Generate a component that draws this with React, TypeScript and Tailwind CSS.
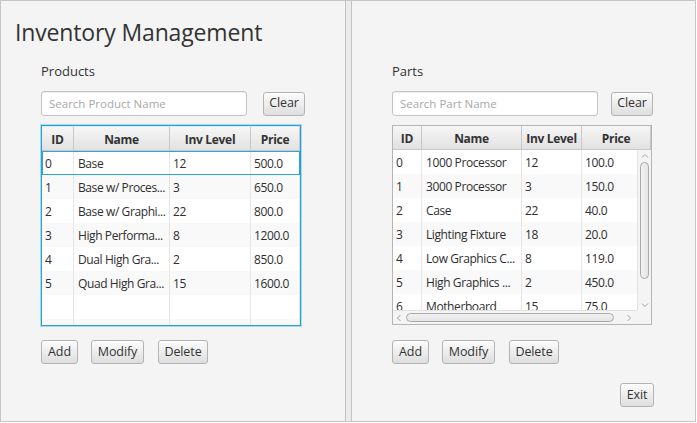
import React from "react";

const btnBase =
  "h-[24px] rounded-[3px] border border-[#b3b3b3] bg-gradient-to-b from-[#fcfcfc] to-[#dedede] text-[12.5px] tracking-[-0.1px] text-[#333] flex items-center justify-center shadow-[inset_0_1px_0_#ffffff] shrink-0";

function Btn({ label, w }: { label: string; w: string }) {
  return <div className={`${btnBase} ${w}`}>{label}</div>;
}

function Search({ placeholder }: { placeholder: string }) {
  return (
    <div className="w-[206px] h-[25px] rounded-[3px] border border-[#c4c4c4] bg-white shadow-[inset_0_1px_1px_#ececec] flex items-center pl-[7px] text-[11.5px] text-[#a8a8a8]">
      {placeholder}
    </div>
  );
}

type Row = [string, string, string, string];

const products: Row[] = [
  ["0", "Base", "12", "500.0"],
  ["1", "Base w/ Proces...", "3", "650.0"],
  ["2", "Base w/ Graphi...", "22", "800.0"],
  ["3", "High Performa...", "8", "1200.0"],
  ["4", "Dual High Gra...", "2", "850.0"],
  ["5", "Quad High Gra...", "15", "1600.0"],
];

const parts: Row[] = [
  ["0", "1000 Processor", "12", "100.0"],
  ["1", "3000 Processor", "3", "150.0"],
  ["2", "Case", "22", "40.0"],
  ["3", "Lighting Fixture", "18", "20.0"],
  ["4", "Low Graphics C...", "8", "119.0"],
  ["5", "High Graphics ...", "2", "450.0"],
  ["6", "Motherboard", "15", "75.0"],
];

const headCell =
  "h-full flex items-center justify-center pt-[3px] font-bold text-[12px] tracking-[-0.3px] text-[#333] border-r border-[#c8c8c8] shrink-0";
const cell =
  "h-full flex items-center pl-[3px] pt-[2px] text-[12px] tracking-[-0.4px] text-[#2e2e2e] border-r border-[#e6e6e6] shrink-0 overflow-hidden whitespace-nowrap";

function Header({ widths }: { widths: string[] }) {
  const labels = ["ID", "Name", "Inv Level", "Price"];
  return (
    <div className="h-[24px] flex border-b border-[#c8c8c8] bg-gradient-to-b from-[#f6f6f6] to-[#e2e2e2] shrink-0">
      {labels.map((l, i) => (
        <div key={l} className={`${headCell} ${widths[i]}`}>
          {l}
        </div>
      ))}
    </div>
  );
}

function Rows({
  rows,
  widths,
  count,
  selected,
}: {
  rows: Row[];
  widths: string[];
  count: number;
  selected?: number;
}) {
  const all: (Row | null)[] = [];
  for (let i = 0; i < count; i++) all.push(rows[i] ?? null);
  return (
    <>
      {all.map((r, i) => (
        <div
          key={i}
          className={`relative h-[24px] flex shrink-0 ${i % 2 === 1 ? "bg-[#f9f9f9]" : "bg-white"}`}
        >
          {widths.map((w, j) => (
            <div key={j} className={`${cell} ${w} ${j === 1 ? "pl-[4px]" : ""}`}>
              {r ? r[j] : ""}
            </div>
          ))}
          {selected === i && (
            <div className="absolute inset-0 border border-[#2fa3d6]" />
          )}
        </div>
      ))}
    </>
  );
}

function ProductsTable() {
  const widths = ["w-[32px]", "w-[96px]", "w-[81px]", "w-[49px]"];
  return (
    <div className="mt-[9px] w-[260px] h-[201px] border border-[#2a9fd4] shadow-[0_0_0_1px_#a9d9ef] bg-white flex flex-col overflow-hidden">
      <div className="h-px bg-[#d7eef8] shrink-0" />
      <Header widths={widths} />
      <Rows rows={products} widths={widths} count={8} selected={0} />
    </div>
  );
}

function PartsTable() {
  const widths = ["w-[29px]", "w-[100px]", "w-[60px]", "w-[69px]"];
  return (
    <div className="mt-[9px] w-[260px] h-[200px] border border-[#b5b5b5] bg-white flex flex-col overflow-hidden">
      <Header widths={widths} />
      <div className="relative flex-1 overflow-hidden">
        <div className="flex flex-col">
          <Rows rows={parts} widths={widths} count={7} />
        </div>
        {/* vertical scrollbar */}
        <div className="absolute top-0 right-0 w-[14px] bottom-[14px] bg-[#f4f4f4] border-l border-[#e2e2e2] flex flex-col items-center">
          <svg width="8" height="6" viewBox="0 0 8 6" className="mt-[3px]">
            <path d="M1 4.5 L4 1.5 L7 4.5" fill="none" stroke="#a0a0a0" strokeWidth="1" />
          </svg>
          <div className="mt-[3px] w-[9px] h-[117px] rounded-[5px] border border-[#a9a9a9] bg-gradient-to-r from-[#f2f2f2] to-[#e4e4e4]" />
          <div className="flex-1" />
          <svg width="8" height="6" viewBox="0 0 8 6" className="mb-[2px]">
            <path d="M1 1.5 L4 4.5 L7 1.5" fill="none" stroke="#a0a0a0" strokeWidth="1" />
          </svg>
        </div>
        {/* horizontal scrollbar */}
        <div className="absolute left-0 right-[14px] bottom-0 h-[14px] bg-[#f4f4f4] border-t border-[#e2e2e2] flex items-center">
          <svg width="6" height="8" viewBox="0 0 6 8" className="ml-[3px]">
            <path d="M4.5 1 L1.5 4 L4.5 7" fill="none" stroke="#a0a0a0" strokeWidth="1" />
          </svg>
          <div className="ml-[4px] w-[208px] h-[9px] rounded-[5px] border border-[#a9a9a9] bg-gradient-to-b from-[#f2f2f2] to-[#e4e4e4]" />
          <div className="flex-1" />
          <svg width="6" height="8" viewBox="0 0 6 8" className="mr-[5px]">
            <path d="M1.5 1 L4.5 4 L1.5 7" fill="none" stroke="#a0a0a0" strokeWidth="1" />
          </svg>
        </div>
        <div className="absolute right-0 bottom-0 w-[14px] h-[14px] bg-[#f4f4f4]" />
      </div>
    </div>
  );
}

export default function App() {
  return (
    <div className="w-[697px] h-[423px] bg-white font-['Open_Sans',sans-serif]">
      <div className="w-[696px] h-[422px] border border-[#c6c6c6] bg-[#f4f4f4] flex">
        {/* left pane */}
        <div className="w-[344px] h-full flex flex-col shrink-0">
          <div className="mt-[15px] pl-[14px] h-[32px] leading-[32px] text-[23px] tracking-[-0.15px] text-[#333]">
            Inventory Management
          </div>
          <div className="ml-[40px] flex flex-col">
            <div className="mt-[14px] h-[18px] leading-[18px] text-[13px] text-[#333]">Products</div>
            <div className="mt-[11px] flex items-center">
              <Search placeholder="Search Product Name" />
              <div className="w-[16px]" />
              <Btn label="Clear" w="w-[42px]" />
            </div>
            <ProductsTable />
            <div className="mt-[14px] flex">
              <Btn label="Add" w="w-[37px]" />
              <div className="w-[13px]" />
              <Btn label="Modify" w="w-[53px]" />
              <div className="w-[14px]" />
              <Btn label="Delete" w="w-[50px]" />
            </div>
          </div>
        </div>
        {/* divider */}
        <div className="w-[7px] h-full border-x border-[#c2c2c2] bg-[#ebebeb] shrink-0" />
        {/* right pane */}
        <div className="flex-1 h-full flex flex-col">
          <div className="mt-[15px] h-[32px]" />
          <div className="ml-[40px] flex flex-col">
            <div className="mt-[14px] h-[18px] leading-[18px] text-[13px] text-[#333]">Parts</div>
            <div className="mt-[11px] flex items-center">
              <Search placeholder="Search Part Name" />
              <div className="w-[13px]" />
              <Btn label="Clear" w="w-[42px]" />
            </div>
            <PartsTable />
            <div className="mt-[15px] flex">
              <Btn label="Add" w="w-[37px]" />
              <div className="w-[13px]" />
              <Btn label="Modify" w="w-[53px]" />
              <div className="w-[14px]" />
              <Btn label="Delete" w="w-[50px]" />
            </div>
            <div className="mt-[19px] flex">
              <div className="w-[228px]" />
              <Btn label="Exit" w="w-[34px]" />
            </div>
          </div>
        </div>
      </div>
    </div>
  );
}
